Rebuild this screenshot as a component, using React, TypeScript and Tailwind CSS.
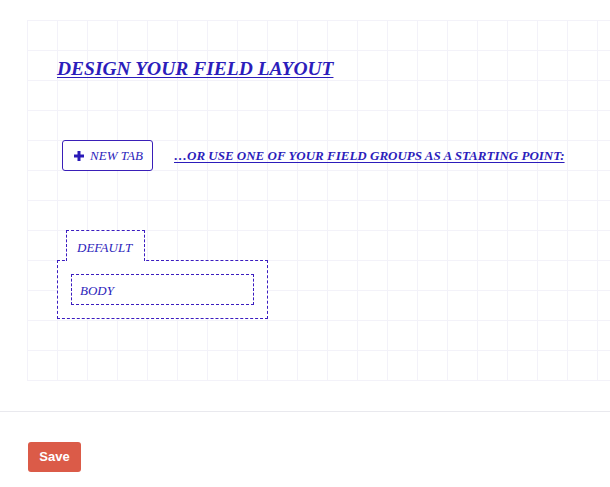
function PlusIcon() {
  return (
    <svg width="10" height="10" viewBox="0 0 10 10" className="shrink-0">
      <path d="M5 0v10M0 5h10" stroke="#2a1ab8" strokeWidth="3" />
    </svg>
  );
}

export default function App() {
  return (
    <div className="min-h-[487px] w-[610px] overflow-hidden bg-white">
      <div className="pl-[27px] pt-[20px]">
        <div className="h-[361px] bg-[linear-gradient(to_right,#f3f2f9_1px,transparent_1px),linear-gradient(to_bottom,#f3f2f9_1px,transparent_1px)] bg-[size:30px_30px] pl-[30px] pt-[37px] font-['Liberation_Serif',serif] italic text-[#2c1dbb]">
          <h2 className="text-[19.5px] font-bold leading-[24px] underline decoration-1 underline-offset-2">
            DESIGN YOUR FIELD LAYOUT
          </h2>

          <div className="mt-[59px] flex items-center gap-[21px]">
            <button
              type="button"
              className="ml-[5px] flex h-[31px] w-[91px] items-center justify-center gap-[6px] rounded-[3px] border border-[#3a1fb8] bg-white pl-[2px] pt-[1px] text-[13px] italic"
            >
              <PlusIcon />
              <span>NEW TAB</span>
            </button>
            <a href="#" className="text-[13px] font-bold underline decoration-1 underline-offset-2">
              …OR USE ONE OF YOUR FIELD GROUPS AS A STARTING POINT:
            </a>
          </div>

          <div className="mt-[59px] w-[211px]">
            <div className="relative z-10 -mb-px ml-[9px] flex h-[31px] w-[79px] items-center border border-b-0 border-dashed border-[#3b1cc0] bg-white pl-[10px] pt-[3px] text-[13px]">
              DEFAULT
            </div>
            <div className="h-[59px] border border-dashed border-[#3b1cc0] bg-white p-[13px]">
              <div className="flex h-[31px] items-center border border-dashed border-[#3b1cc0] pl-[8px] pt-[3px] text-[13px]">
                BODY
              </div>
            </div>
          </div>
        </div>
      </div>

      <div className="mt-[30px] border-t border-[#e9e9ee]" />

      <div className="pl-[28px] pt-[30px]">
        <button
          type="button"
          className="h-[30px] w-[53px] rounded-[3px] bg-[#db5b48] font-['Liberation_Sans',Arial,sans-serif] text-[13px] font-bold text-white"
        >
          Save
        </button>
      </div>
    </div>
  );
}
